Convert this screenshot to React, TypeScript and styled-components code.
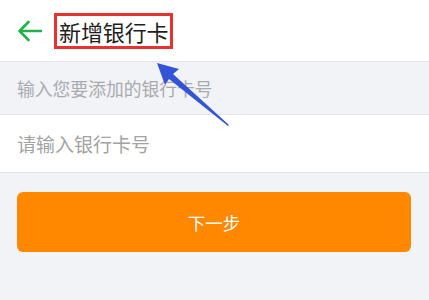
import React from "react";
import styled, { createGlobalStyle } from "styled-components";

const GlobalStyle = createGlobalStyle`
  html, body {
    margin: 0;
    padding: 0;
    background: #f2f3f7;
    font-family: "Noto Sans CJK SC", "Noto Sans", sans-serif;
  }
`;

const Page = styled.div`
  position: relative;
  width: 429px;
  height: 300px;
  background: #f2f3f7;
  overflow: hidden;
`;

const Header = styled.header`
  height: 61px;
  display: flex;
  align-items: center;
  padding-left: 17px;
  background: #fff;
  border-bottom: 1px solid #e3e4e8;
`;

const BackButton = styled.button`
  display: flex;
  align-items: center;
  padding: 0;
  margin: 0;
  border: none;
  background: none;
  width: 25px;
  height: 24px;
`;

const TitleBox = styled.div`
  margin-left: 12px;
  margin-top: 0;
  padding: 0 1px 0 2px;
  height: 30px;
  display: flex;
  align-items: center;
  border: 3px solid #e83232;
`;

const Title = styled.h1`
  margin: 0;
  font-size: 22px;
  font-weight: 400;
  color: #1e1e1e;
  letter-spacing: -0.1px;
`;

const Hint = styled.div`
  height: 52px;
  display: flex;
  align-items: center;
  padding-left: 17px;
  font-size: 17.8px;
  color: #a9aaae;
  border-bottom: 1px solid #e3e4e8;
`;

const InputRow = styled.div`
  height: 57px;
  display: flex;
  align-items: center;
  padding: 0 17px;
  background: #fff;
  border-bottom: 1px solid #e3e4e8;
`;

const CardInput = styled.input`
  flex: 1;
  border: none;
  outline: none;
  padding: 0;
  font-family: inherit;
  font-size: 19px;
  color: #333;
  background: transparent;

  &::placeholder {
    color: #a3a3a3;
  }
`;

const Actions = styled.div`
  padding: 19px 18px 0 17px;
`;

const NextButton = styled.button`
  width: 100%;
  height: 60px;
  border: none;
  border-radius: 6px;
  background: #ff8800;
  color: #fff;
  font-family: inherit;
  font-size: 17.5px;
`;

const Pointer = styled.svg`
  position: absolute;
  left: 150px;
  top: 55px;
  pointer-events: none;
`;

const App = () => (
  <>
    <GlobalStyle />
    <Page>
      <Header>
        <BackButton aria-label="返回">
          <svg width="25" height="22" viewBox="0 0 25 22">
            <path
              d="M24 11H2.5M11.5 2L2.5 11l9 9"
              fill="none"
              stroke="#22b24c"
              strokeWidth="2.6"
              strokeLinecap="round"
              strokeLinejoin="round"
            />
          </svg>
        </BackButton>
        <TitleBox>
          <Title>新增银行卡</Title>
        </TitleBox>
      </Header>
      <Hint>输入您要添加的银行卡号</Hint>
      <InputRow>
        <CardInput placeholder="请输入银行卡号" />
      </InputRow>
      <Actions>
        <NextButton>下一步</NextButton>
      </Actions>
      <Pointer width="90" height="80" viewBox="0 0 90 80">
        <path
          d="M7 8 L29 14 L23 19 L79 70 L78 71 L19 24 L15 30 Z"
          fill="#3454d8"
        />
      </Pointer>
    </Page>
  </>
);

export default App;
